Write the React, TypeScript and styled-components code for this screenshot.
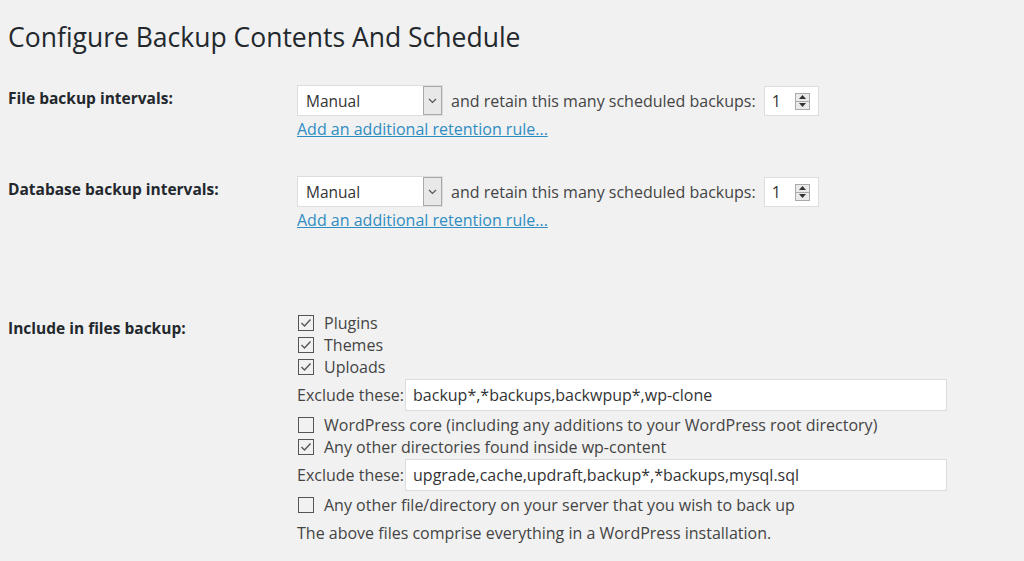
import React from "react";
import styled, { createGlobalStyle } from "styled-components";

const Global = createGlobalStyle`
  html, body { margin: 0; padding: 0; background: #f1f1f1; }
  body { font-family: "Open Sans", "Noto Sans", sans-serif; color: #444; }
`;

const Page = styled.div`
  padding: 18px 8px 0 8px;
  width: 1024px;
  height: 561px;
  box-sizing: border-box;
  overflow: hidden;
`;

const Title = styled.h1`
  margin: 0 0 29px 0;
  font-size: 26.5px;
  font-weight: 400;
  color: #23282d;
  line-height: 38px;
`;

const Row = styled.div<{ $gap?: number }>`
  display: grid;
  grid-template-columns: 289px 1fr;
  margin-bottom: ${(p) => p.$gap ?? 0}px;
`;

const Label = styled.div<{ $top?: number }>`
  font-weight: 700;
  font-size: 15.5px;
  color: #23282d;
  padding-top: ${(p) => p.$top ?? 0}px;
`;

const Cell = styled.div`
  display: flex;
  flex-direction: column;
  font-size: 16px;
`;

const Line = styled.div`
  display: flex;
  align-items: center;
  gap: 8px;
`;

const Select = styled.div`
  width: 146px;
  height: 31px;
  box-sizing: border-box;
  background: #fff;
  border: 1px solid #ddd;
  display: flex;
  align-items: center;
  padding-left: 8px;
  position: relative;
  font-size: 15.5px;
  color: #333;
`;

const SelectArrow = styled.div`
  position: absolute;
  right: 0;
  top: 0;
  bottom: 0;
  width: 17px;
  background: #e8e8e8;
  border: 1px solid #a9a9a9;
  display: flex;
  align-items: center;
  justify-content: center;
`;

const NumberBox = styled.div`
  width: 55px;
  height: 30px;
  box-sizing: border-box;
  background: #fff;
  border: 1px solid #ddd;
  display: flex;
  align-items: center;
  padding-left: 7px;
  position: relative;
  color: #333;
`;

const Spinner = styled.div`
  position: absolute;
  right: 8px;
  top: 6px;
  width: 15px;
  height: 17px;
  border: 1px solid #aaa;
  background: #eaeaea;
  box-sizing: border-box;
  display: flex;
  flex-direction: column;
`;

const SpinHalf = styled.div<{ $bottom?: boolean }>`
  flex: 1;
  display: flex;
  align-items: center;
  justify-content: center;
  border-top: ${(p) => (p.$bottom ? "1px solid #aaa" : "none")};
`;

const Link = styled.a`
  color: #2f8dc2;
  text-decoration: underline;
  font-size: 16px;
  line-height: 26px;
  cursor: pointer;
`;

const CheckRow = styled.label`
  display: flex;
  align-items: center;
  gap: 10px;
  height: 22px;
  color: #444;
`;

const Box = styled.span`
  width: 16px;
  height: 16px;
  box-sizing: border-box;
  border: 1.5px solid #555;
  background: transparent;
  display: inline-flex;
  align-items: center;
  justify-content: center;
  margin-left: 1px;
`;

const ExcludeRow = styled.div`
  display: flex;
  align-items: center;
  gap: 1px;
  height: 32px;
  margin: 1px 0 3px 0;
`;

const TextInput = styled.div`
  width: 542px;
  height: 32px;
  box-sizing: border-box;
  background: #fff;
  border: 1px solid #ddd;
  display: flex;
  align-items: center;
  padding-left: 7px;
  color: #333;
`;

const Note = styled.div`
  margin-top: 6px;
  line-height: 22px;
`;

const Check = ({ checked, children }: { checked: boolean; children: React.ReactNode }) => (
  <CheckRow>
    <Box>
      {checked && (
        <svg width="12" height="10" viewBox="0 0 12 10">
          <path d="M1.5 5 L4.5 8 L10.5 1.5" fill="none" stroke="#555" strokeWidth="1.4" />
        </svg>
      )}
    </Box>
    {children}
  </CheckRow>
);

const IntervalControls = () => (
  <Cell>
    <Line>
      <Select>
        Manual
        <SelectArrow>
          <svg width="9" height="6" viewBox="0 0 9 6">
            <path d="M1 1 L4.5 4.5 L8 1" fill="none" stroke="#555" strokeWidth="1.2" />
          </svg>
        </SelectArrow>
      </Select>
      <span>and retain this many scheduled backups:</span>
      <NumberBox>
        1
        <Spinner>
          <SpinHalf>
            <svg width="7" height="4" viewBox="0 0 7 4">
              <path d="M0 4 L3.5 0 L7 4 Z" fill="#333" />
            </svg>
          </SpinHalf>
          <SpinHalf $bottom>
            <svg width="7" height="4" viewBox="0 0 7 4">
              <path d="M0 0 L3.5 4 L7 0 Z" fill="#333" />
            </svg>
          </SpinHalf>
        </Spinner>
      </NumberBox>
    </Line>
    <div>
      <Link>Add an additional retention rule...</Link>
    </div>
  </Cell>
);

export default function App() {
  return (
    <Page>
      <Global />
      <Title>Configure Backup Contents And Schedule</Title>
      <Row $gap={34}>
        <Label $top={2}>File backup intervals:</Label>
        <IntervalControls />
      </Row>
      <Row $gap={79}>
        <Label $top={2}>Database backup intervals:</Label>
        <IntervalControls />
      </Row>
      <Row>
        <Label $top={5}>Include in files backup:</Label>
        <Cell>
          <Check checked>Plugins</Check>
          <Check checked>Themes</Check>
          <Check checked>Uploads</Check>
          <ExcludeRow>
            <span>Exclude these:</span>
            <TextInput>backup*,*backups,backwpup*,wp-clone</TextInput>
          </ExcludeRow>
          <Check checked={false}>WordPress core (including any additions to your WordPress root directory)</Check>
          <Check checked>Any other directories found inside wp-content</Check>
          <ExcludeRow>
            <span>Exclude these:</span>
            <TextInput>upgrade,cache,updraft,backup*,*backups,mysql.sql</TextInput>
          </ExcludeRow>
          <Check checked={false}>Any other file/directory on your server that you wish to back up</Check>
          <Note>The above files comprise everything in a WordPress installation.</Note>
        </Cell>
      </Row>
    </Page>
  );
}
